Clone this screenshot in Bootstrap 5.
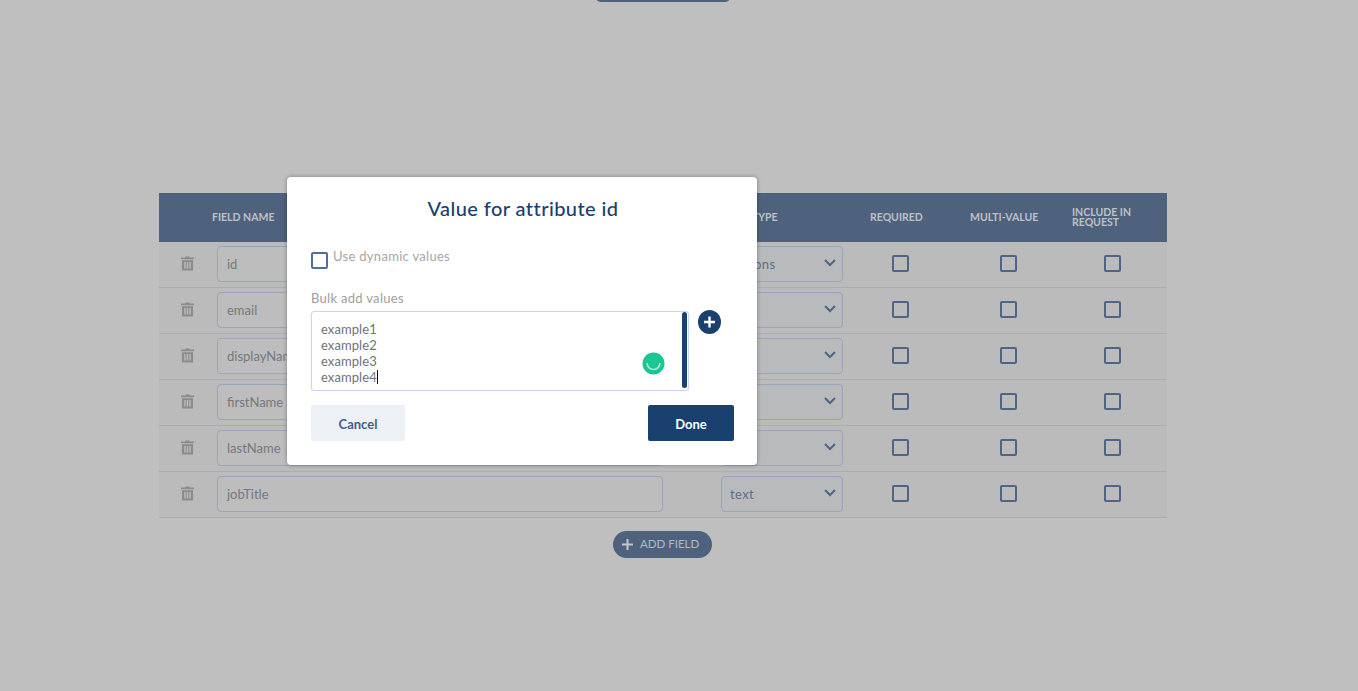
<!DOCTYPE html>
<html lang="en">
<head>
<meta charset="utf-8">
<title>Value for attribute</title>
<link rel="stylesheet" href="https://cdn.jsdelivr.net/npm/bootstrap@5.3.0/dist/css/bootstrap.min.css">
<style>
html,body{height:100%}
body{background:#bfbfbf;font-family:"Lato","Noto Sans",sans-serif;overflow:hidden;position:relative;color:#7d7f83}
.top-zone{height:193px}
.top-pill{width:132px;height:2px;background:#4f627d;border-radius:0 0 6px 6px / 0 0 2px 2px;margin-left:597px}
.grid-wrap{width:1008px;margin-left:159px}
.grid-head{height:49px;background:#4f627d;color:#bcc0c6;font-size:10.5px;font-weight:700;line-height:10px;text-transform:uppercase;padding-bottom:1px}
.grid-row{height:46px;background:#bbb;border-bottom:1px solid #aaadb2;padding-bottom:1px}
.c-trash{width:58px}
.c-name{width:504px}
.c-type{width:122px}
.c-req{width:116px}
.c-multi{width:96px}
.c-inc{width:112px}
.h-name{margin-left:-5px}
.h-type{padding-left:31px}
.h-req{padding-left:27px}
.h-multi{padding-left:11px}
.h-inc{padding-left:17px;padding-bottom:1px}
.p-req{padding-left:49px}
.p-multi{padding-left:41px}
.p-inc{padding-left:49px}
.name-box,.type-box{height:36px;border:1px solid #9aa5b9;border-radius:4px;padding-left:9px;padding-top:2px;font-size:13px;color:#75787e;background:#bdbdbd}
.name-box{width:446px}
.type-box{width:122px;background:#b9babc;color:#5f6d83;letter-spacing:.4px;padding-left:8px;padding-right:6px}
.chev{margin-bottom:5px}
.chk{width:17px;height:17px;border:2px solid #4f6486;border-radius:2px;display:block;margin-bottom:1px}
.trash-ico{margin:0 2px 2px 0}
.add-pill{width:99px;height:27px;background:#4f627d;border-radius:14px;color:#b4b9c1;font-size:11.5px;margin-left:454px;margin-top:13px;padding-left:9px;gap:7px}
.add-text{padding-bottom:2px}
.dlg{position:absolute;left:287px;top:177px;width:470px;height:288px;border:0;border-radius:4px;background:#fff;box-shadow:0 0 4px rgba(0,0,0,.35);padding:0 23px 0 24px}
.dlg-title{font-size:20px;font-weight:500;color:#1a4070;line-height:24px;margin-top:19px;text-align:center;letter-spacing:.42px;margin-bottom:0;margin-right:-1px}
.dyn-row{margin-top:32px;height:18px}
.dyn-chk{width:17px;height:17px;border:2px solid #4f6f9a;border-radius:2px;margin-right:5px}
.dyn-label{font-size:13px;color:#a6a6a6;line-height:14px;margin-top:-3px;letter-spacing:.3px}
.bulk-label{font-size:13px;color:#a0a0a0;line-height:16px;margin-top:20px;letter-spacing:.3px}
.bulk-row{margin-top:5px}
.bulk-box{position:relative;width:378px;height:80px;border:1px solid #c9d6ef;box-shadow:0 0 1px #cfdbf0;border-radius:3px;padding:9px 9px;font-size:13px;line-height:16px;color:#717377;letter-spacing:.08px}
.caret-mark{display:inline-block;width:1px;height:14px;background:#111;vertical-align:-2px}
.bulk-scroll{position:absolute;right:1px;top:0;width:5px;height:76px;background:#1a4070;border-radius:3px}
.bulk-dot{position:absolute;left:330px;top:40px;width:23px;height:23px}
.plus-dot{width:23px;height:24px;margin-left:9px;margin-top:-1px}
.btn-cancel,.btn-done{height:36px;border-radius:2px;font-size:13px;font-weight:700;padding:3px 0 0}
.btn-cancel{width:94px;background:#edf0f5;color:#3f5f8c;border:0}
.btn-done{width:86px;background:#1a4070;color:#fff;border:0}
.btn-cancel:hover{background:#edf0f5;color:#3f5f8c}
.btn-done:hover{background:#1a4070;color:#fff}
.dlg-actions{margin-top:14px}
</style>
</head>
<body>
<div class="top-zone"><div class="top-pill"></div></div>

<div class="grid-wrap">
  <div class="grid-head d-flex align-items-center">
    <div class="c-trash"></div>
    <div class="c-name"><div class="h-name">Field name</div></div>
    <div class="c-type h-type">Type</div>
    <div class="c-req h-req">Required</div>
    <div class="c-multi h-multi">Multi-value</div>
    <div class="c-inc h-inc">Include in<br>request</div>
  </div>

  <div class="grid-row d-flex align-items-center">
    <div class="c-trash d-flex justify-content-center"><svg class="trash-ico" width="13" height="15" viewBox="0 0 14 15"><path fill="#8c8c8c" d="M5 0h4l.6 1H14v2H0V1h4.4zM1 4h12v11H1zm2.5 2v7H5V6zm2.7 0v7h1.600V6zM9 6v7h1.500V6z" fill-rule="evenodd"/></svg></div>
    <div class="c-name"><div class="name-box d-flex align-items-center">id</div></div>
    <div class="c-type"><div class="type-box d-flex align-items-center justify-content-between"><span>options</span><svg class="chev" width="12" height="8" viewBox="0 0 12 8"><path d="M1 1l5 5 5-5" fill="none" stroke="#4f6486" stroke-width="2"/></svg></div></div>
    <div class="c-req p-req"><span class="chk"></span></div>
    <div class="c-multi p-multi"><span class="chk"></span></div>
    <div class="c-inc p-inc"><span class="chk"></span></div>
  </div>
  <div class="grid-row d-flex align-items-center">
    <div class="c-trash d-flex justify-content-center"><svg class="trash-ico" width="13" height="15" viewBox="0 0 14 15"><path fill="#8c8c8c" d="M5 0h4l.6 1H14v2H0V1h4.4zM1 4h12v11H1zm2.5 2v7H5V6zm2.7 0v7h1.600V6zM9 6v7h1.500V6z" fill-rule="evenodd"/></svg></div>
    <div class="c-name"><div class="name-box d-flex align-items-center">email</div></div>
    <div class="c-type"><div class="type-box d-flex align-items-center justify-content-between"><span>text</span><svg class="chev" width="12" height="8" viewBox="0 0 12 8"><path d="M1 1l5 5 5-5" fill="none" stroke="#4f6486" stroke-width="2"/></svg></div></div>
    <div class="c-req p-req"><span class="chk"></span></div>
    <div class="c-multi p-multi"><span class="chk"></span></div>
    <div class="c-inc p-inc"><span class="chk"></span></div>
  </div>
  <div class="grid-row d-flex align-items-center">
    <div class="c-trash d-flex justify-content-center"><svg class="trash-ico" width="13" height="15" viewBox="0 0 14 15"><path fill="#8c8c8c" d="M5 0h4l.6 1H14v2H0V1h4.4zM1 4h12v11H1zm2.5 2v7H5V6zm2.7 0v7h1.600V6zM9 6v7h1.500V6z" fill-rule="evenodd"/></svg></div>
    <div class="c-name"><div class="name-box d-flex align-items-center">displayName</div></div>
    <div class="c-type"><div class="type-box d-flex align-items-center justify-content-between"><span>text</span><svg class="chev" width="12" height="8" viewBox="0 0 12 8"><path d="M1 1l5 5 5-5" fill="none" stroke="#4f6486" stroke-width="2"/></svg></div></div>
    <div class="c-req p-req"><span class="chk"></span></div>
    <div class="c-multi p-multi"><span class="chk"></span></div>
    <div class="c-inc p-inc"><span class="chk"></span></div>
  </div>
  <div class="grid-row d-flex align-items-center">
    <div class="c-trash d-flex justify-content-center"><svg class="trash-ico" width="13" height="15" viewBox="0 0 14 15"><path fill="#8c8c8c" d="M5 0h4l.6 1H14v2H0V1h4.4zM1 4h12v11H1zm2.5 2v7H5V6zm2.7 0v7h1.600V6zM9 6v7h1.500V6z" fill-rule="evenodd"/></svg></div>
    <div class="c-name"><div class="name-box d-flex align-items-center">firstName</div></div>
    <div class="c-type"><div class="type-box d-flex align-items-center justify-content-between"><span>text</span><svg class="chev" width="12" height="8" viewBox="0 0 12 8"><path d="M1 1l5 5 5-5" fill="none" stroke="#4f6486" stroke-width="2"/></svg></div></div>
    <div class="c-req p-req"><span class="chk"></span></div>
    <div class="c-multi p-multi"><span class="chk"></span></div>
    <div class="c-inc p-inc"><span class="chk"></span></div>
  </div>
  <div class="grid-row d-flex align-items-center">
    <div class="c-trash d-flex justify-content-center"><svg class="trash-ico" width="13" height="15" viewBox="0 0 14 15"><path fill="#8c8c8c" d="M5 0h4l.6 1H14v2H0V1h4.4zM1 4h12v11H1zm2.5 2v7H5V6zm2.7 0v7h1.600V6zM9 6v7h1.500V6z" fill-rule="evenodd"/></svg></div>
    <div class="c-name"><div class="name-box d-flex align-items-center">lastName</div></div>
    <div class="c-type"><div class="type-box d-flex align-items-center justify-content-between"><span>text</span><svg class="chev" width="12" height="8" viewBox="0 0 12 8"><path d="M1 1l5 5 5-5" fill="none" stroke="#4f6486" stroke-width="2"/></svg></div></div>
    <div class="c-req p-req"><span class="chk"></span></div>
    <div class="c-multi p-multi"><span class="chk"></span></div>
    <div class="c-inc p-inc"><span class="chk"></span></div>
  </div>
  <div class="grid-row d-flex align-items-center">
    <div class="c-trash d-flex justify-content-center"><svg class="trash-ico" width="13" height="15" viewBox="0 0 14 15"><path fill="#8c8c8c" d="M5 0h4l.6 1H14v2H0V1h4.4zM1 4h12v11H1zm2.5 2v7H5V6zm2.7 0v7h1.600V6zM9 6v7h1.500V6z" fill-rule="evenodd"/></svg></div>
    <div class="c-name"><div class="name-box d-flex align-items-center">jobTitle</div></div>
    <div class="c-type"><div class="type-box d-flex align-items-center justify-content-between"><span>text</span><svg class="chev" width="12" height="8" viewBox="0 0 12 8"><path d="M1 1l5 5 5-5" fill="none" stroke="#4f6486" stroke-width="2"/></svg></div></div>
    <div class="c-req p-req"><span class="chk"></span></div>
    <div class="c-multi p-multi"><span class="chk"></span></div>
    <div class="c-inc p-inc"><span class="chk"></span></div>
  </div>

  <div class="add-pill d-flex align-items-center">
    <svg width="11" height="11" viewBox="0 0 11 11"><path d="M5.500 0v11M0 5.500h11" stroke="#c4c8ce" stroke-width="2"/></svg>
    <span class="add-text">ADD FIELD</span>
  </div>
</div>

<div class="dlg modal-content">
  <h5 class="dlg-title">Value for attribute id</h5>
  <div class="dyn-row d-flex">
    <span class="dyn-chk d-block flex-shrink-0"></span>
    <span class="dyn-label">Use dynamic values</span>
  </div>
  <div class="bulk-label">Bulk add values</div>
  <div class="bulk-row d-flex align-items-start">
    <div class="bulk-box">
      example1<br>example2<br>example3<br>example4<span class="caret-mark"></span>
      <span class="bulk-scroll"></span>
      <svg class="bulk-dot" viewBox="0 0 23 23"><circle cx="11.5" cy="11.5" r="11" fill="#1bc694"/><path d="M5 11a6.500 6.500 0 0 0 13 0" fill="none" stroke="#a9ecd6" stroke-width="1.600"/></svg>
    </div>
    <svg class="plus-dot" viewBox="0 0 23 24"><ellipse cx="11.500" cy="12" rx="11.500" ry="12" fill="#1a4070"/><path d="M11.500 6.500v11M6 12h11" stroke="#fff" stroke-width="2.400"/></svg>
  </div>
  <div class="dlg-actions d-flex justify-content-between">
    <button type="button" class="btn btn-cancel">Cancel</button>
    <button type="button" class="btn btn-done">Done</button>
  </div>
</div>
<script src="https://cdn.jsdelivr.net/npm/bootstrap@5.3.0/dist/js/bootstrap.bundle.min.js"></script>
</body>
</html>
